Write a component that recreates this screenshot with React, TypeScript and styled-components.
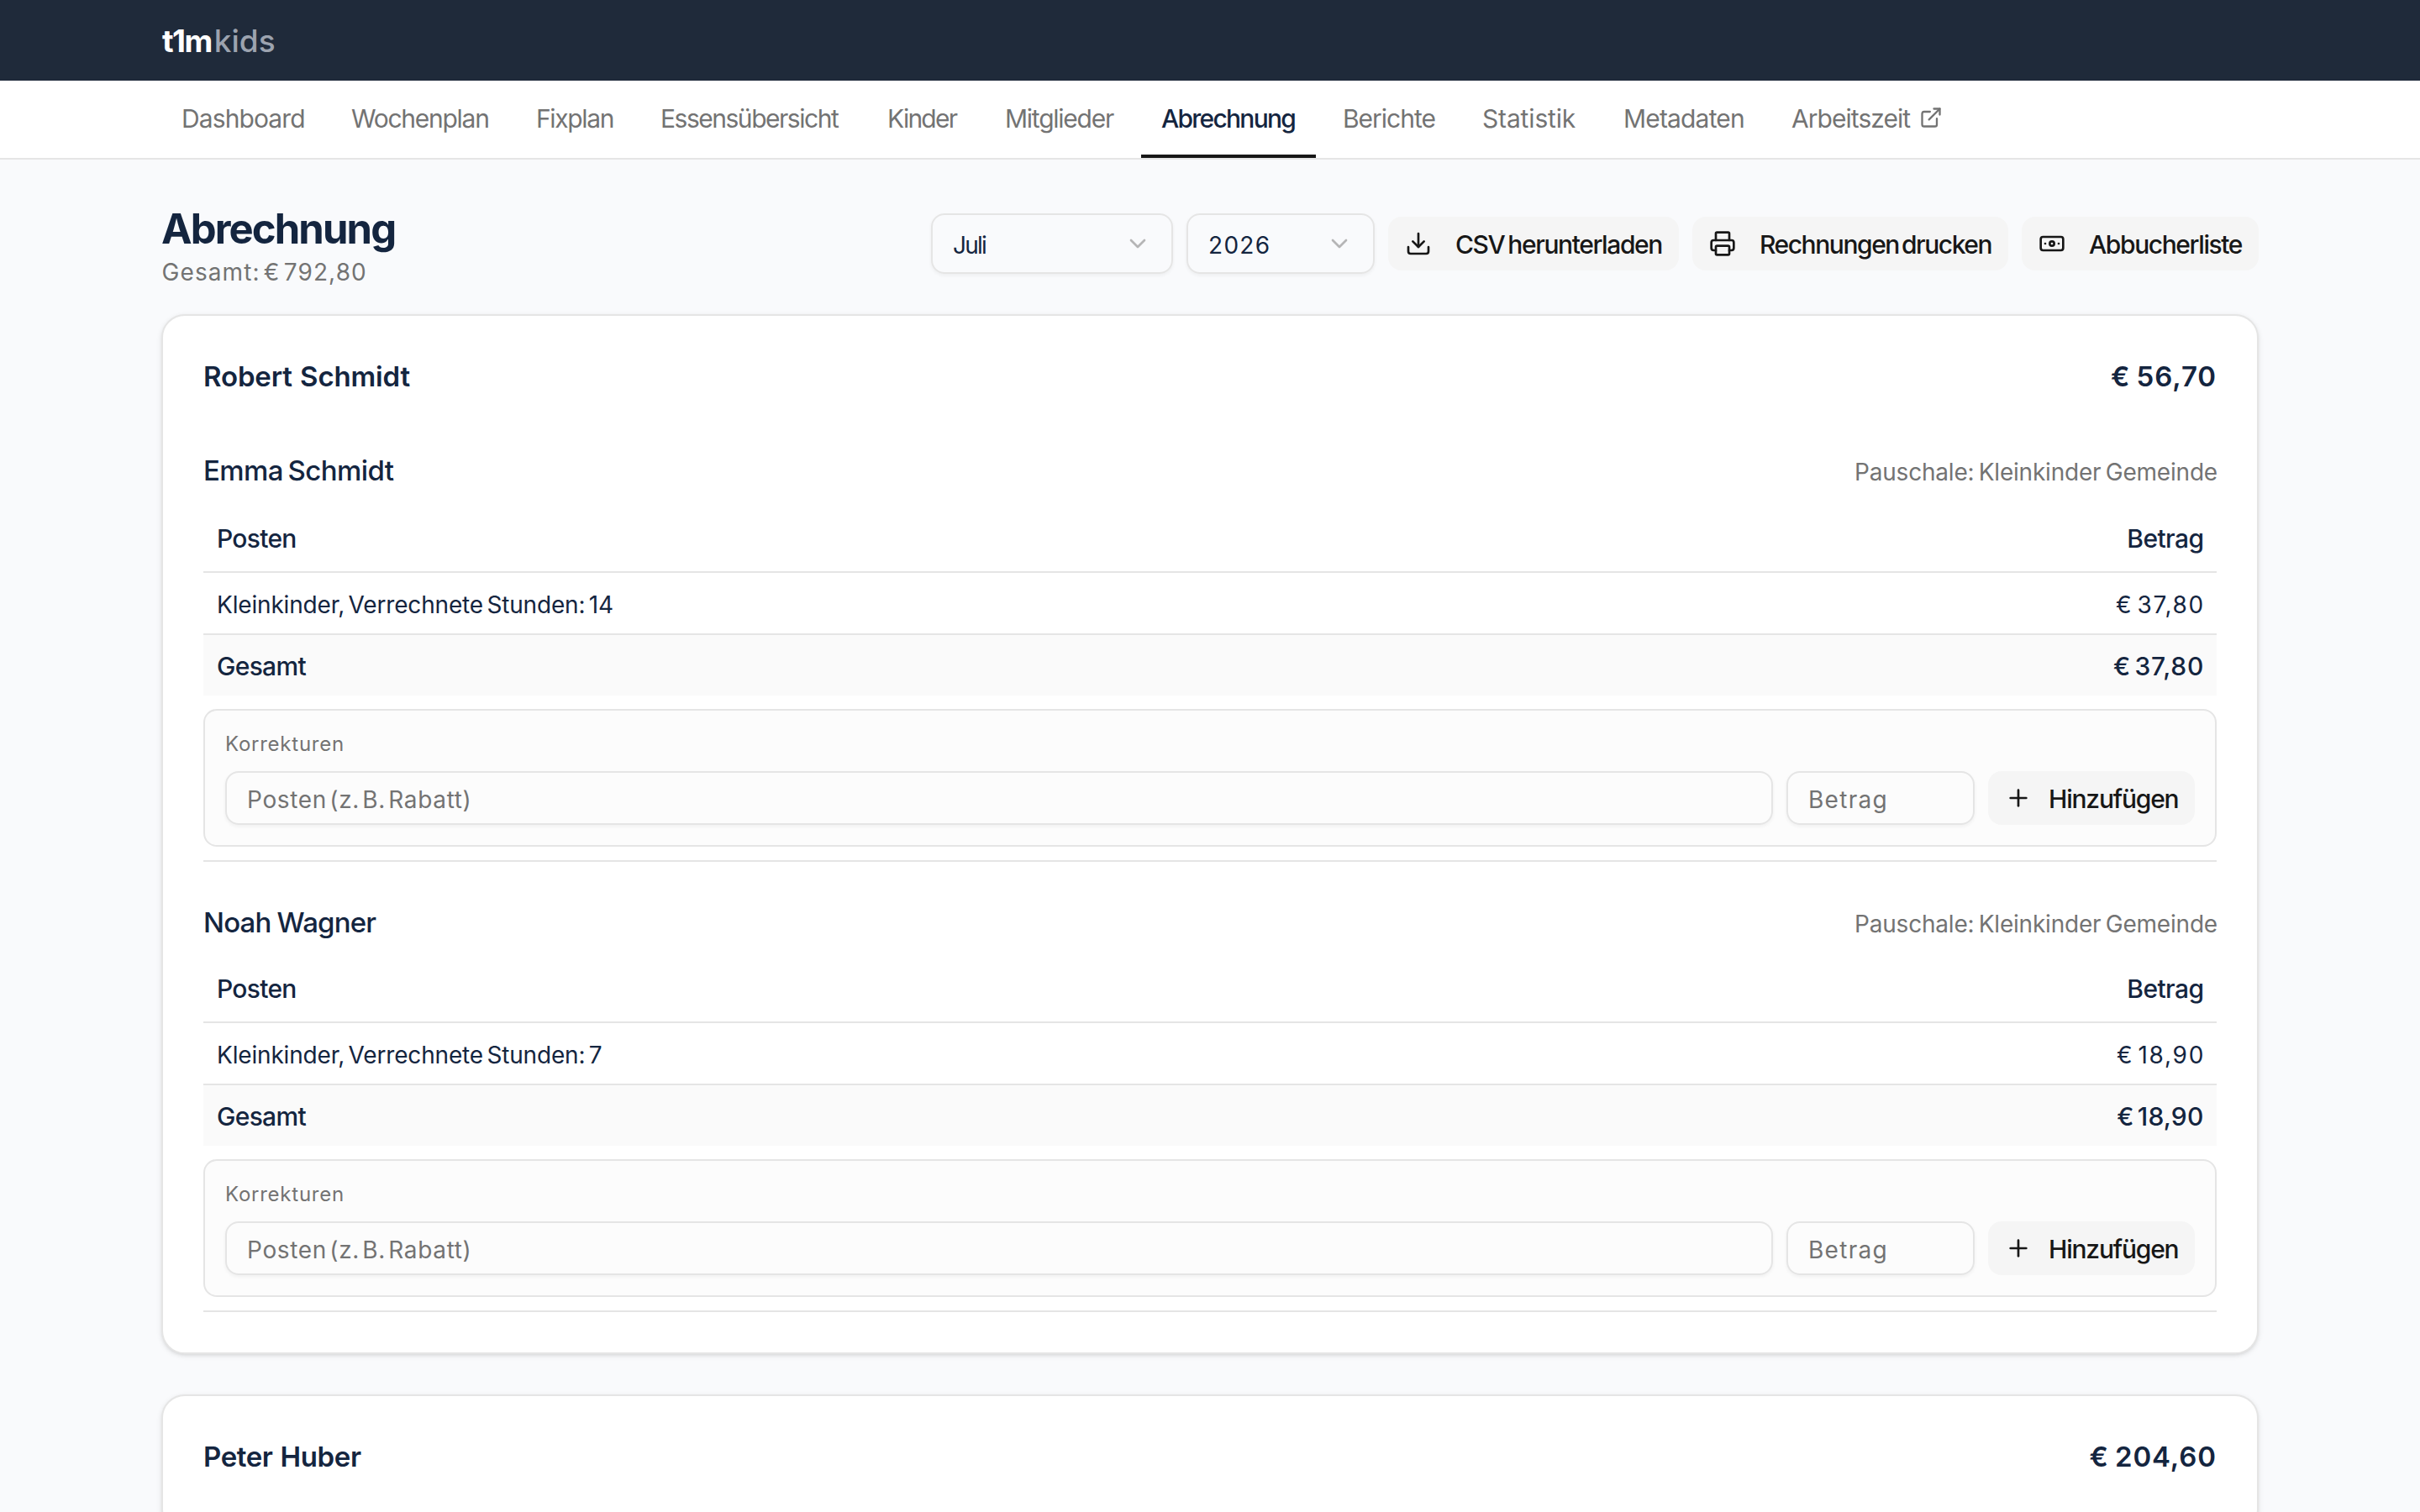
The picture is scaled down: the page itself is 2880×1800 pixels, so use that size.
import React from "react";
import styled, { createGlobalStyle } from "styled-components";
import { Banknote, ChevronDown, Download, ExternalLink, Plus, Printer } from "lucide-react";

const color = {
  navy: "#14253f",
  muted: "#737373",
  line: "#e5e5e5",
  ink: "#171717",
  subtle: "#f5f5f5",
};

const GlobalStyle = createGlobalStyle`
  *, *::before, *::after { box-sizing: border-box; }
  body {
    margin: 0;
    background: #f9fafc;
    color: ${color.navy};
    font-family: Inter, "Liberation Sans", sans-serif;
    font-size: 28px;
  }
  h1, h2, h3 { margin: 0; }
`;

interface Tracking {
  $ls?: number;
  $ws?: number;
}

const Page = styled.div`
  height: 100vh;
  overflow: hidden;
`;

const Container = styled.div`
  width: 2496px;
  margin: 0 auto;
`;

/* ---------- header ---------- */

const TopBar = styled.header`
  height: 96px;
  background: #1f2a3a;
`;

const Logo = styled.div`
  height: 96px;
  display: flex;
  align-items: center;
  padding: 1px 0 0 1px;
  font-size: 37px;
  font-weight: 700;
  letter-spacing: -1.5px;
  color: #fff;
`;

const LogoSuffix = styled.span`
  margin-left: 3px;
  font-weight: 500;
  letter-spacing: 0;
  color: #9ca3af;
`;

const NavBar = styled.nav`
  height: 94px;
  background: #fff;
  border-bottom: 2px solid ${color.line};
`;

const Tabs = styled.div`
  display: flex;
  gap: 8px;
`;

const Tab = styled.a<{ $text: number; $ls: number; $active?: boolean }>`
  flex: none;
  display: flex;
  align-items: center;
  gap: 8px;
  height: 92px;
  padding: 0 24px;
  border-bottom: 4px solid ${(p) => (p.$active ? color.ink : "transparent")};
  color: ${(p) => (p.$active ? color.navy : color.muted)};
  font-size: 30px;
  font-weight: ${(p) => (p.$active ? 500 : 400)};
  white-space: nowrap;

  span {
    width: ${(p) => p.$text}px;
    padding-top: 2px;
    letter-spacing: ${(p) => p.$ls}px;
  }
`;

/* ---------- page heading ---------- */

const Main = styled.main`
  display: flex;
  flex-direction: column;
  gap: 48px;
`;

const Heading = styled.div`
  display: flex;
  justify-content: space-between;
  height: 136px;
  margin-top: 48px;
`;

const HeadingText = styled.div`
  display: flex;
  flex-direction: column;
  padding-top: 3px;
`;

const Title = styled.h1`
  font-size: 49px;
  line-height: 63px;
  font-weight: 700;
  letter-spacing: -1.9px;
`;

const Total = styled.p`
  margin: 0;
  padding-left: 0.5px;
  line-height: 40px;
  color: ${color.muted};
  letter-spacing: 1.1px;
  word-spacing: -4.8px;
`;

const Toolbar = styled.div`
  display: flex;
  align-items: center;
  gap: 16px;
  height: 72px;
  margin-top: 16px;
`;

const Select = styled.button<{ $width: number } & Tracking>`
  display: flex;
  align-items: center;
  justify-content: space-between;
  width: ${(p) => p.$width}px;
  height: 72px;
  padding: 0 24px;
  border: 2px solid ${color.line};
  border-radius: 16px;
  background: transparent;
  box-shadow: 0 2px 4px rgba(0, 0, 0, 0.05);
  color: ${color.navy};
  font: inherit;
  letter-spacing: ${(p) => p.$ls ?? 0}px;

  span { padding-top: 3px; }
  svg { color: #b5b5b6; }
`;

const Button = styled.button<{ $width: number; $gap?: number } & Tracking>`
  flex: none;
  display: flex;
  align-items: center;
  gap: ${(p) => p.$gap ?? 28}px;
  width: ${(p) => p.$width}px;
  height: 64px;
  padding: 0 20px;
  border: 0;
  border-radius: 16px;
  background: ${color.subtle};
  color: ${color.ink};
  font: inherit;
  font-size: 30px;
  font-weight: 500;
  letter-spacing: ${(p) => p.$ls ?? 0}px;
  word-spacing: ${(p) => p.$ws ?? 0}px;
  white-space: nowrap;

  span { padding-top: 2px; }
  svg { flex: none; }
`;

/* ---------- invoice cards ---------- */

const Card = styled.section`
  padding: 48px;
  border: 2px solid ${color.line};
  border-radius: 28px;
  background: #fff;
  box-shadow: 0 2px 6px rgba(0, 0, 0, 0.1), 0 2px 4px -2px rgba(0, 0, 0, 0.1);
`;

const CardHead = styled.div`
  display: flex;
  justify-content: space-between;
  height: 64px;
  font-size: 33px;
  line-height: 48px;
  font-weight: 600;
`;

const Payer = styled.h2<Tracking>`
  font: inherit;
  letter-spacing: ${(p) => p.$ls ?? 0}px;
  word-spacing: ${(p) => p.$ws ?? 0}px;
`;

const Sum = styled.div`
  letter-spacing: 0.9px;
  word-spacing: -2px;
`;

const ChildSection = styled.section<{ $lead: number }>`
  padding: 44px 0 16px;
  border-bottom: 2px solid ${color.line};

  > header {
    display: flex;
    justify-content: space-between;
    height: 56px;
    line-height: 56px;
    margin-bottom: ${(p) => p.$lead}px;
  }
`;

const ChildName = styled.h3<Tracking>`
  font-size: 33px;
  font-weight: 500;
  letter-spacing: ${(p) => p.$ls ?? 0}px;
  word-spacing: ${(p) => p.$ws ?? 0}px;
`;

const Flat = styled.div`
  margin-right: -1px;
  padding-top: 2px;
  color: ${color.muted};
  letter-spacing: -0.2px;
  word-spacing: -2.4px;
`;

const Table = styled.div`
  display: flex;
  flex-direction: column;
`;

const Row = styled.div<{ $kind: "head" | "body" | "foot" }>`
  display: flex;
  align-items: center;
  justify-content: space-between;
  height: ${(p) => ({ head: 82, body: 74, foot: 72 })[p.$kind]}px;
  padding: ${(p) => ({ head: 2, body: 4, foot: 2 })[p.$kind]}px 16px 0;
  border-bottom: ${(p) => (p.$kind === "foot" ? "0" : `2px solid ${color.line}`)};
  background: ${(p) => (p.$kind === "foot" ? "#fafafa" : "transparent")};
  font-size: ${(p) => (p.$kind === "body" ? 28 : 30)}px;
  font-weight: ${(p) => (p.$kind === "body" ? 400 : 500)};
`;

const Cell = styled.span<{ $end?: number } & Tracking>`
  margin-right: ${(p) => p.$end ?? 0}px;
  letter-spacing: ${(p) => p.$ls ?? 0}px;
  word-spacing: ${(p) => p.$ws ?? 0}px;
`;

const Corrections = styled.div`
  height: 164px;
  margin-top: 16px;
  padding: 24px;
  border: 2px solid ${color.line};
  border-radius: 16px;
  background: #fcfcfc;
`;

const CorrectionsLabel = styled.div`
  height: 48px;
  line-height: 32px;
  font-size: 24px;
  font-weight: 400;
  letter-spacing: 0.75px;
  color: ${color.muted};
`;

const CorrectionsForm = styled.div`
  display: flex;
  gap: 16px;
`;

const Input = styled.input<{ $width?: number } & Tracking>`
  flex: ${(p) => (p.$width ? "none" : "1")};
  width: ${(p) => (p.$width ? `${p.$width}px` : "auto")};
  min-width: 0;
  height: 64px;
  padding: 3px 24px 0;
  border: 2px solid ${color.line};
  border-radius: 16px;
  background: transparent;
  box-shadow: 0 2px 4px rgba(0, 0, 0, 0.05);
  color: ${color.navy};
  font: inherit;
  letter-spacing: ${(p) => p.$ls ?? 0}px;
  word-spacing: ${(p) => p.$ws ?? 0}px;

  &::placeholder { color: ${color.muted}; opacity: 1; }
`;

/* ---------- data ---------- */

const tabs = [
  { label: "Dashboard", text: 146, ls: -0.9 },
  { label: "Wochenplan", text: 164, ls: -1.27 },
  { label: "Fixplan", text: 92, ls: -1.35 },
  { label: "Essensübersicht", text: 214, ls: -1.48 },
  { label: "Kinder", text: 84, ls: -1.75 },
  { label: "Mitglieder", text: 130, ls: -1.25 },
  { label: "Abrechnung", text: 160, ls: -1.75, active: true },
  { label: "Berichte", text: 110, ls: -1.01 },
  { label: "Statistik", text: 112, ls: -0.15 },
  { label: "Metadaten", text: 144, ls: -0.83 },
  { label: "Arbeitszeit", text: 144, ls: -0.95, external: true },
];

const children = [
  { name: "Emma Schmidt", ls: -0.6, ws: -2.5, hours: 14, amount: "€ 37,80", sumLs: 0.75, sumWs: -4.2, sumEnd: -1, lead: 12 },
  { name: "Noah Wagner", ls: -0.8, ws: -1, hours: 7, amount: "€ 18,90", sumLs: 0.15, sumWs: -3.8, sumEnd: -0.4, lead: 10 },
];

type Child = (typeof children)[number];

function ChildInvoice({ child }: { child: Child }) {
  return (
    <ChildSection $lead={child.lead}>
      <header>
        <ChildName $ls={child.ls} $ws={child.ws}>{child.name}</ChildName>
        <Flat>Pauschale: Kleinkinder Gemeinde</Flat>
      </header>
      <Table>
        <Row $kind="head">
          <Cell $ls={-0.7}>Posten</Cell>
          <Cell $ls={-0.6} $end={-0.4}>Betrag</Cell>
        </Row>
        <Row $kind="body">
          <Cell $ls={-0.17} $ws={-3.3}>Kleinkinder, Verrechnete Stunden: {child.hours}</Cell>
          <Cell $ls={1.7} $ws={-4.5} $end={-2}>{child.amount}</Cell>
        </Row>
        <Row $kind="foot">
          <Cell $ls={-0.7}>Gesamt</Cell>
          <Cell $ls={child.sumLs} $ws={child.sumWs} $end={child.sumEnd}>{child.amount}</Cell>
        </Row>
      </Table>
      <Corrections>
        <CorrectionsLabel>Korrekturen</CorrectionsLabel>
        <CorrectionsForm>
          <Input placeholder="Posten (z. B. Rabatt)" $ls={0.65} $ws={-5.2} />
          <Input placeholder="Betrag" $width={224} $ls={1.3} />
          <Button $width={246} $gap={20} $ls={-1.2}>
            <Plus size={32} />
            <span>Hinzufügen</span>
          </Button>
        </CorrectionsForm>
      </Corrections>
    </ChildSection>
  );
}

export default function App() {
  return (
    <Page>
      <GlobalStyle />
      <TopBar>
        <Container>
          <Logo>
            t1m<LogoSuffix>kids</LogoSuffix>
          </Logo>
        </Container>
      </TopBar>
      <NavBar>
        <Container>
          <Tabs>
            {tabs.map((tab) => (
              <Tab key={tab.label} $text={tab.text} $ls={tab.ls} $active={tab.active}>
                <span>{tab.label}</span>
                {tab.external && <ExternalLink size={28} />}
              </Tab>
            ))}
          </Tabs>
        </Container>
      </NavBar>
      <Container>
        <Heading>
          <HeadingText>
            <Title>Abrechnung</Title>
            <Total>Gesamt: € 792,80</Total>
          </HeadingText>
          <Toolbar>
            <Select $width={288} $ls={-1.8}>
              <span>Juli</span>
              <ChevronDown size={32} />
            </Select>
            <Select $width={224} $ls={1.3}>
              <span>2026</span>
              <ChevronDown size={32} />
            </Select>
            <Button $width={346} $ls={-1.4} $ws={-2.7}>
              <Download size={32} />
              <span>CSV herunterladen</span>
            </Button>
            <Button $width={376} $ls={-1.45} $ws={-3.5}>
              <Printer size={32} />
              <span>Rechnungen drucken</span>
            </Button>
            <Button $width={282} $ls={-1.4}>
              <Banknote size={32} />
              <span>Abbucherliste</span>
            </Button>
          </Toolbar>
        </Heading>
        <Main>
          <Card>
            <CardHead>
              <Payer $ls={-0.15} $ws={1.2}>Robert Schmidt</Payer>
              <Sum>€ 56,70</Sum>
            </CardHead>
            {children.map((child) => (
              <ChildInvoice key={child.name} child={child} />
            ))}
          </Card>
          <Card>
            <CardHead>
              <Payer $ls={-0.4} $ws={1.2}>Peter Huber</Payer>
              <Sum>€ 204,60</Sum>
            </CardHead>
          </Card>
        </Main>
      </Container>
    </Page>
  );
}
